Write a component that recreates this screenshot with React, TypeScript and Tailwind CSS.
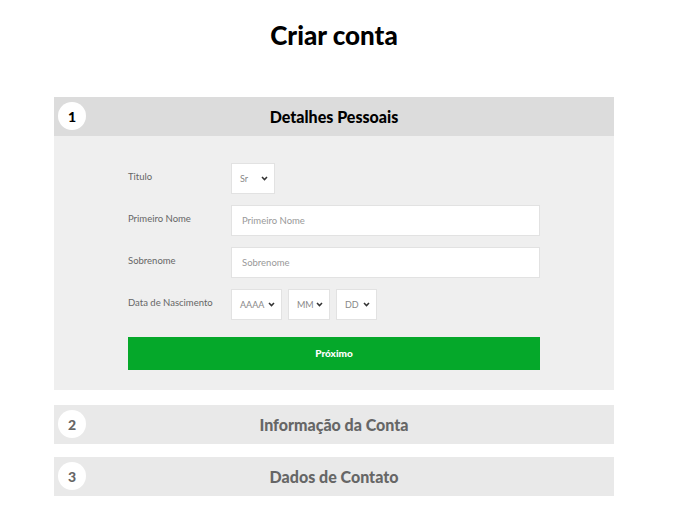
import React from 'react';

const Chevron = () => (
    <svg width="7" height="5" viewBox="0 0 7 5" className="shrink-0">
        <path d="M1 1 L3.5 3.6 L6 1" fill="none" stroke="#333" strokeWidth="1.5" />
    </svg>
);

const SelectBox = ({ value, width }: { value: string; width: string }) => (
    <div className={`${width} h-[31px] bg-white border border-[#e2e2e2] flex items-center justify-between pl-[8px] pr-[6px] text-[9px] text-[#888]`}>
        <span>{value}</span>
        <Chevron />
    </div>
);

const StepHeader = ({ num, title, active }: { num: number; title: string; active?: boolean }) => (
    <div className={`h-[39px] flex items-center relative ${active ? 'bg-[#dcdcdc]' : 'bg-[#e9e9e9]'}`}>
        <div className="absolute left-[4px] top-[5px] w-[28px] h-[28px] rounded-full bg-white flex items-center justify-center">
            <span className={`text-[14px] font-black ${active ? 'text-black' : 'text-[#666]'}`}>{num}</span>
        </div>
        <h2 className={`w-full text-center text-[16px] font-black ${active ? 'text-black' : 'text-[#666]'}`}>{title}</h2>
    </div>
);

const Row = ({ label, children }: { label: string; children: React.ReactNode }) => (
    <div className="flex items-center h-[31px]">
        <label className="w-[103px] text-[9.5px] text-[#666] -mt-[3px]">{label}</label>
        {children}
    </div>
);

export default function App() {
    return (
        <div className="w-[700px] h-[530px] bg-white" style={{ fontFamily: 'Lato, "Open Sans", sans-serif' }}>
            <div className="ml-[54px] w-[560px]">
                <h1 className="pt-[19px] h-[97px] text-center text-[26px] font-black text-black leading-[32px]">
                    Criar conta
                </h1>

                {/* Step 1 */}
                <div>
                    <StepHeader num={1} title="Detalhes Pessoais" active />
                    <div className="bg-[#efefef] pt-[27px] pb-[20px] px-[74px]">
                        <div className="flex flex-col gap-[11px]">
                            <Row label="Titulo">
                                <SelectBox value="Sr" width="w-[44px]" />
                            </Row>
                            <Row label="Primeiro Nome">
                                <input
                                    placeholder="Primeiro Nome"
                                    className="flex-1 h-[31px] bg-white border border-[#e2e2e2] px-[10px] text-[9.5px] placeholder:text-[#999] outline-none"
                                />
                            </Row>
                            <Row label="Sobrenome">
                                <input
                                    placeholder="Sobrenome"
                                    className="flex-1 h-[31px] bg-white border border-[#e2e2e2] px-[10px] text-[9.5px] placeholder:text-[#999] outline-none"
                                />
                            </Row>
                            <Row label="Data de Nascimento">
                                <div className="flex gap-[6px]">
                                    <SelectBox value="AAAA" width="w-[51px]" />
                                    <SelectBox value="MM" width="w-[42px]" />
                                    <SelectBox value="DD" width="w-[41px]" />
                                </div>
                            </Row>
                        </div>
                        <button className="mt-[17px] w-full h-[33px] bg-[#05a82a] text-white text-[10px] font-black">
                            Próximo
                        </button>
                    </div>
                </div>

                <div className="mt-[15px]">
                    <StepHeader num={2} title="Informação da Conta" />
                </div>
                <div className="mt-[13px]">
                    <StepHeader num={3} title="Dados de Contato" />
                </div>
            </div>
        </div>
    );
}
